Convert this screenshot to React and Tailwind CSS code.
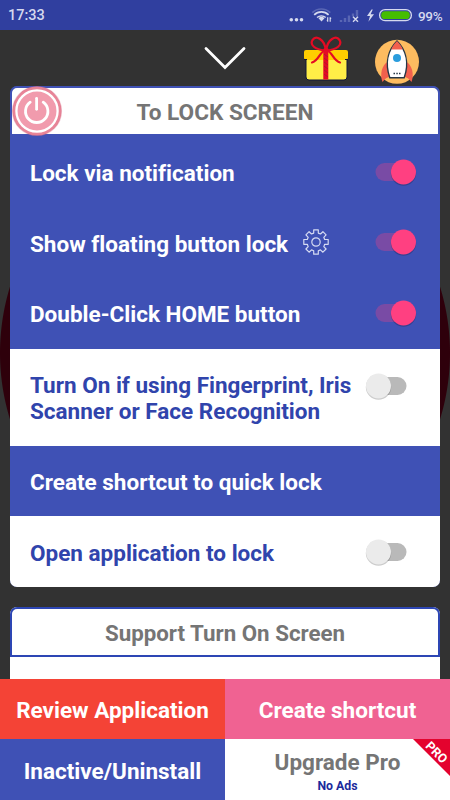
import { useState } from 'react';
import clsx from 'clsx';

const Switch = ({ on, onClick }) => (
  <button
    onClick={onClick}
    className={clsx('w-[50px] h-[26px] shrink-0 flex items-center', on ? 'justify-end' : 'justify-start')}
  >
    <svg width="50" height="28" viewBox="0 0 50 28" className="overflow-visible">
      <rect x="9.5" y="5" width="31" height="18" rx="9" fill={on ? '#ff4081' : '#b9b9b9'} fillOpacity={on ? 0.3 : 1} />
      <circle cx={on ? 37.5 : 12.5} cy="15" r="12.7" fill="#000" fillOpacity="0.2" />
      <circle cx={on ? 37.5 : 12.5} cy="14" r="12.5" fill={on ? '#ff4081' : '#ebebeb'} />
    </svg>
  </button>
);

const GearIcon = () => (
  <svg width="26" height="26" viewBox="0 0 26 26" fill="none" stroke="#d5daf2" strokeWidth="1.2" strokeLinejoin="round">
    <path d="M10.7 0.8h4.6v3.3l2.2 0.9 2.4-2.3 3.2 3.2-2.3 2.4 0.9 2.2h3.5v4.8h-3.5l-0.9 2.3 2.3 2.4-3.2 3.2-2.4-2.3-2.2 0.9v3.4h-4.6v-3.4l-2.2-0.9-2.4 2.3-3.2-3.2 2.3-2.4-0.9-2.3H0.8v-4.8h3.5l0.9-2.2-2.3-2.4 3.2-3.2 2.4 2.3 2.2-0.9z" />
    <circle cx="13" cy="13" r="4.2" />
  </svg>
);

const GiftIcon = () => (
  <svg width="46" height="46" viewBox="0 0 46 46" fill="none">
    <rect x="3" y="20" width="41" height="24" rx="3" fill="#ffee47" stroke="#10163a" strokeWidth="1" />
    <rect x="1" y="14" width="44" height="10" rx="2" fill="#ffce00" />
    <path d="M1 23.5h3M42 23.5h3" stroke="#10163a" strokeWidth="1" />
    <rect x="20.3" y="15" width="5" height="28.5" fill="#e50b24" />
    <path d="M21 18l4 3M21 22l4 3M21 26l4 3M21 30l4 3M21 34l4 3M21 38l4 3" stroke="#9b1734" strokeWidth="0.7" />
    <g stroke="#e50b24" strokeWidth="2.2" strokeLinecap="round">
      <path d="M22 14.5C12 13.5 6.5 9 9.5 4C13 -1 21.5 3 22.7 14" />
      <path d="M24 14.5C34 13.5 39.5 9 36.5 4C33 -1 24.5 3 23.3 14" />
      <path d="M22 14.5C16.5 16 15.5 25 9 26.5" />
      <path d="M24 14.5C29.5 16 30.5 25 37 26.5" />
    </g>
    <circle cx="23" cy="14.5" r="2.8" fill="#e50b24" />
  </svg>
);

const RocketIcon = () => (
  <svg width="44" height="46" viewBox="0 0 44 46">
    <circle cx="22" cy="22.8" r="22" fill="#fdbc60" />
    <path d="M13 22.5C7 26 4.5 35 7.5 43C9.5 40 12.5 38 15.5 37.5z" fill="#f2604d" />
    <path d="M31 22.5C37 26 39.5 35 36.5 43C34.5 40 31.5 38 28.5 37.5z" fill="#f2604d" />
    <path d="M22 2C14.5 9.5 9 22 14.8 38.8h14.4C35 22 29.5 9.5 22 2z" fill="#fff" stroke="#263746" strokeWidth="1.4" />
    <path d="M22 2C19.5 4.5 17.5 7.2 16.3 10.4h11.4C26.5 7.2 24.5 4.5 22 2z" fill="#f2604d" />
    <circle cx="22" cy="19" r="4" fill="#2a9ddd" />
    <path d="M18.5 34.5h1.5M21.3 34.5h1.5M24 34.5h1.5" stroke="#263746" strokeWidth="1.5" />
  </svg>
);

const PowerButton = () => (
  <svg width="52" height="52" viewBox="0 0 52 52" fill="none" className="absolute left-[11px] top-[85px]">
    <circle cx="26" cy="26" r="24.5" fill="#e88497" stroke="#d6708a" strokeOpacity="0.35" strokeWidth="1.2" />
    <circle cx="26" cy="26" r="20.6" fill="#f19bad" stroke="#fff" strokeWidth="2.3" />
    <path d="M19.2 17.2A11.2 11.2 0 1 0 32.2 17.2" stroke="#fff" strokeWidth="2.8" strokeLinecap="round" />
    <path d="M25.6 13.3v11" stroke="#fff" strokeWidth="2.8" strokeLinecap="round" />
  </svg>
);

const StatusBar = () => (
  <div className="h-[30px] shrink-0 bg-[#303f9f] flex items-center pl-2 pr-2 text-[#d5d9ee]">
    <span className="text-[14.5px] font-medium pt-[2px]">17:33</span>
    <svg width="126" height="20" viewBox="0 0 126 20" fill="none" className="ml-auto mr-[3px]">
      <g fill="#d5d9ee">
        <circle cx="2.3" cy="14.7" r="1.8" />
        <circle cx="7.5" cy="14.7" r="1.8" />
        <circle cx="12.5" cy="14.7" r="1.8" />
        <path d="M32.5 16.5l-3-3.2a4.3 4.3 0 0 1 6 0z" />
      </g>
      <path d="M23.3 7.6a13 13 0 0 1 18 0" stroke="#5966b4" strokeWidth="1.6" />
      <path d="M25.2 9.9a10.2 10.2 0 0 1 14.4 0" stroke="#d5d9ee" strokeWidth="1.7" />
      <path d="M28 12.6a6.3 6.3 0 0 1 8.7 0" stroke="#d5d9ee" strokeWidth="1.4" />
      <path d="M38.7 12.3v4.5M41.2 12.3v4.5M37.8 15.5h1M41 13.4h1.2" stroke="#d5d9ee" strokeWidth="1.2" />
      <path d="M52 17v-2M56 17v-4M60 17v-6.5M64 11.5v-3M68 11.5v-6.5" stroke="#5966b4" strokeWidth="2.4" />
      <path d="M64 11.8l5 5M69 11.8l-5 5" stroke="#d5d9ee" strokeWidth="1.4" />
      <path d="M82.5 4.5l-4.5 6.5h3l-1.6 5.7 5.6-7.4h-3.4l2.2-4.8z" fill="#d5d9ee" />
      <rect x="90.6" y="4.7" width="31.8" height="11" rx="5.5" stroke="#d5d9ee" strokeWidth="1.3" />
      <rect x="92.2" y="6.3" width="28.6" height="7.8" rx="3.9" fill="#45bd00" />
    </svg>
    <span className="w-6 text-[13.5px] tracking-[-0.3px] font-medium pt-[2px]">99%</span>
  </div>
);

const CardTitle = ({ children, className }) => (
  <div className={clsx('h-[50px] pt-[3px] bg-white border-2 rounded-t-[7px] flex items-center justify-center font-bold text-[#757575]', className)}>
    {children}
  </div>
);

export default function App() {
  const [settings, setSettings] = useState({
    notification: true,
    floating: true,
    doubleClick: true,
    fingerprint: false,
    openApp: false,
  });

  const toggle = (key) => setSettings((prev) => ({ ...prev, [key]: !prev[key] }));

  return (
    <div className="relative w-[450px] h-[800px] overflow-hidden bg-[#323232] flex flex-col font-['Roboto',sans-serif] [font-variant-ligatures:none]">
      <StatusBar />

      {/* Main area, with the big dark button behind the cards */}
      <div className="flex-1 min-h-0 overflow-hidden px-[10px] bg-[radial-gradient(circle_at_225px_323px,#2e000b_224.5px,transparent_225.5px)]">
        <div className="h-[56px] flex">
          <svg width="42" height="26" viewBox="0 0 42 26" fill="none" className="ml-[194px] mt-[15px]">
            <path d="M2 3.5L21 22.5L40 3.5" stroke="#fff" strokeWidth="2.8" strokeLinecap="round" />
          </svg>
          <div className="ml-[57px] mt-[6px] shrink-0"><GiftIcon /></div>
          <div className="ml-[26px] mt-[9px] shrink-0"><RocketIcon /></div>
        </div>

        <div className="h-[501px] rounded-[7px] overflow-hidden flex flex-col bg-[#3f51b5] text-[22.5px] leading-[26px] font-bold text-white">
          <CardTitle className="border-[#3f51b5] border-b-[2px] text-[22.6px]">To LOCK SCREEN</CardTitle>
          <div className="h-[71px] pl-5 pr-[24px] flex items-center justify-between">
            <span className="pt-[3px]">Lock via notification</span>
            <Switch on={settings.notification} onClick={() => toggle('notification')} />
          </div>
          <div className="h-[70.5px] pl-5 pr-[24px] flex items-center">
            <span className="pt-[3px]">Show floating button lock</span>
            <div className="ml-[15px] mr-auto"><GearIcon /></div>
            <Switch on={settings.floating} onClick={() => toggle('floating')} />
          </div>
          <div className="h-[71px] pl-5 pr-[24px] flex items-center justify-between">
            <span className="pt-[2px]">Double-Click HOME button</span>
            <Switch on={settings.doubleClick} onClick={() => toggle('doubleClick')} />
          </div>
          <div className="h-[97px] pl-5 pr-[24px] pt-[24px] bg-white text-[#3044ac] flex items-start justify-between">
            <span className="whitespace-nowrap -mt-px">
              Turn On if using Fingerprint, Iris<br />
              Scanner or Face Recognition
            </span>
            <Switch on={settings.fingerprint} onClick={() => toggle('fingerprint')} />
          </div>
          <div className="h-[70.5px] pt-[3px] pl-5 flex items-center">Create shortcut to quick lock</div>
          <div className="h-[71px] pl-5 pr-[24px] bg-white text-[#3044ac] flex items-center justify-between">
            <span className="pt-[2px]">Open application to lock</span>
            <Switch on={settings.openApp} onClick={() => toggle('openApp')} />
          </div>
        </div>

        <div className="mt-5 h-[80px] bg-white rounded-t-[7px]">
          <CardTitle className="border-[#2d46b4] text-[22.3px]">Support Turn On Screen</CardTitle>
        </div>
      </div>

      <PowerButton />

      {/* Bottom actions */}
      <div className="shrink-0 h-[121px] grid grid-cols-2 grid-rows-[60px_61px] text-[22.5px] font-bold text-white">
        <button className="bg-[#f44336] pt-[3px]">Review Application</button>
        <button className="bg-[#f06292] pt-[3px]">Create shortcut</button>
        <button className="bg-[#3f51b5] pt-[4px]">Inactive/Uninstall</button>
        <button className="relative overflow-hidden bg-white flex flex-col items-center pt-[9px]">
          <span className="leading-[28px] text-[#757575]">Upgrade Pro</span>
          <span className="text-[12.3px] leading-[18px] pt-px text-[#1a2a9c]">No Ads</span>
          <svg width="38" height="38" viewBox="0 0 38 38" className="absolute right-0 top-0">
            <path d="M1 0H38V37z" fill="#e4032e" />
            <text x="24.5" y="17.7" textAnchor="middle" fontSize="12.5" fontWeight="700" fill="#fff" transform="rotate(45 24.5 13.5)">PRO</text>
          </svg>
        </button>
      </div>
    </div>
  );
}
